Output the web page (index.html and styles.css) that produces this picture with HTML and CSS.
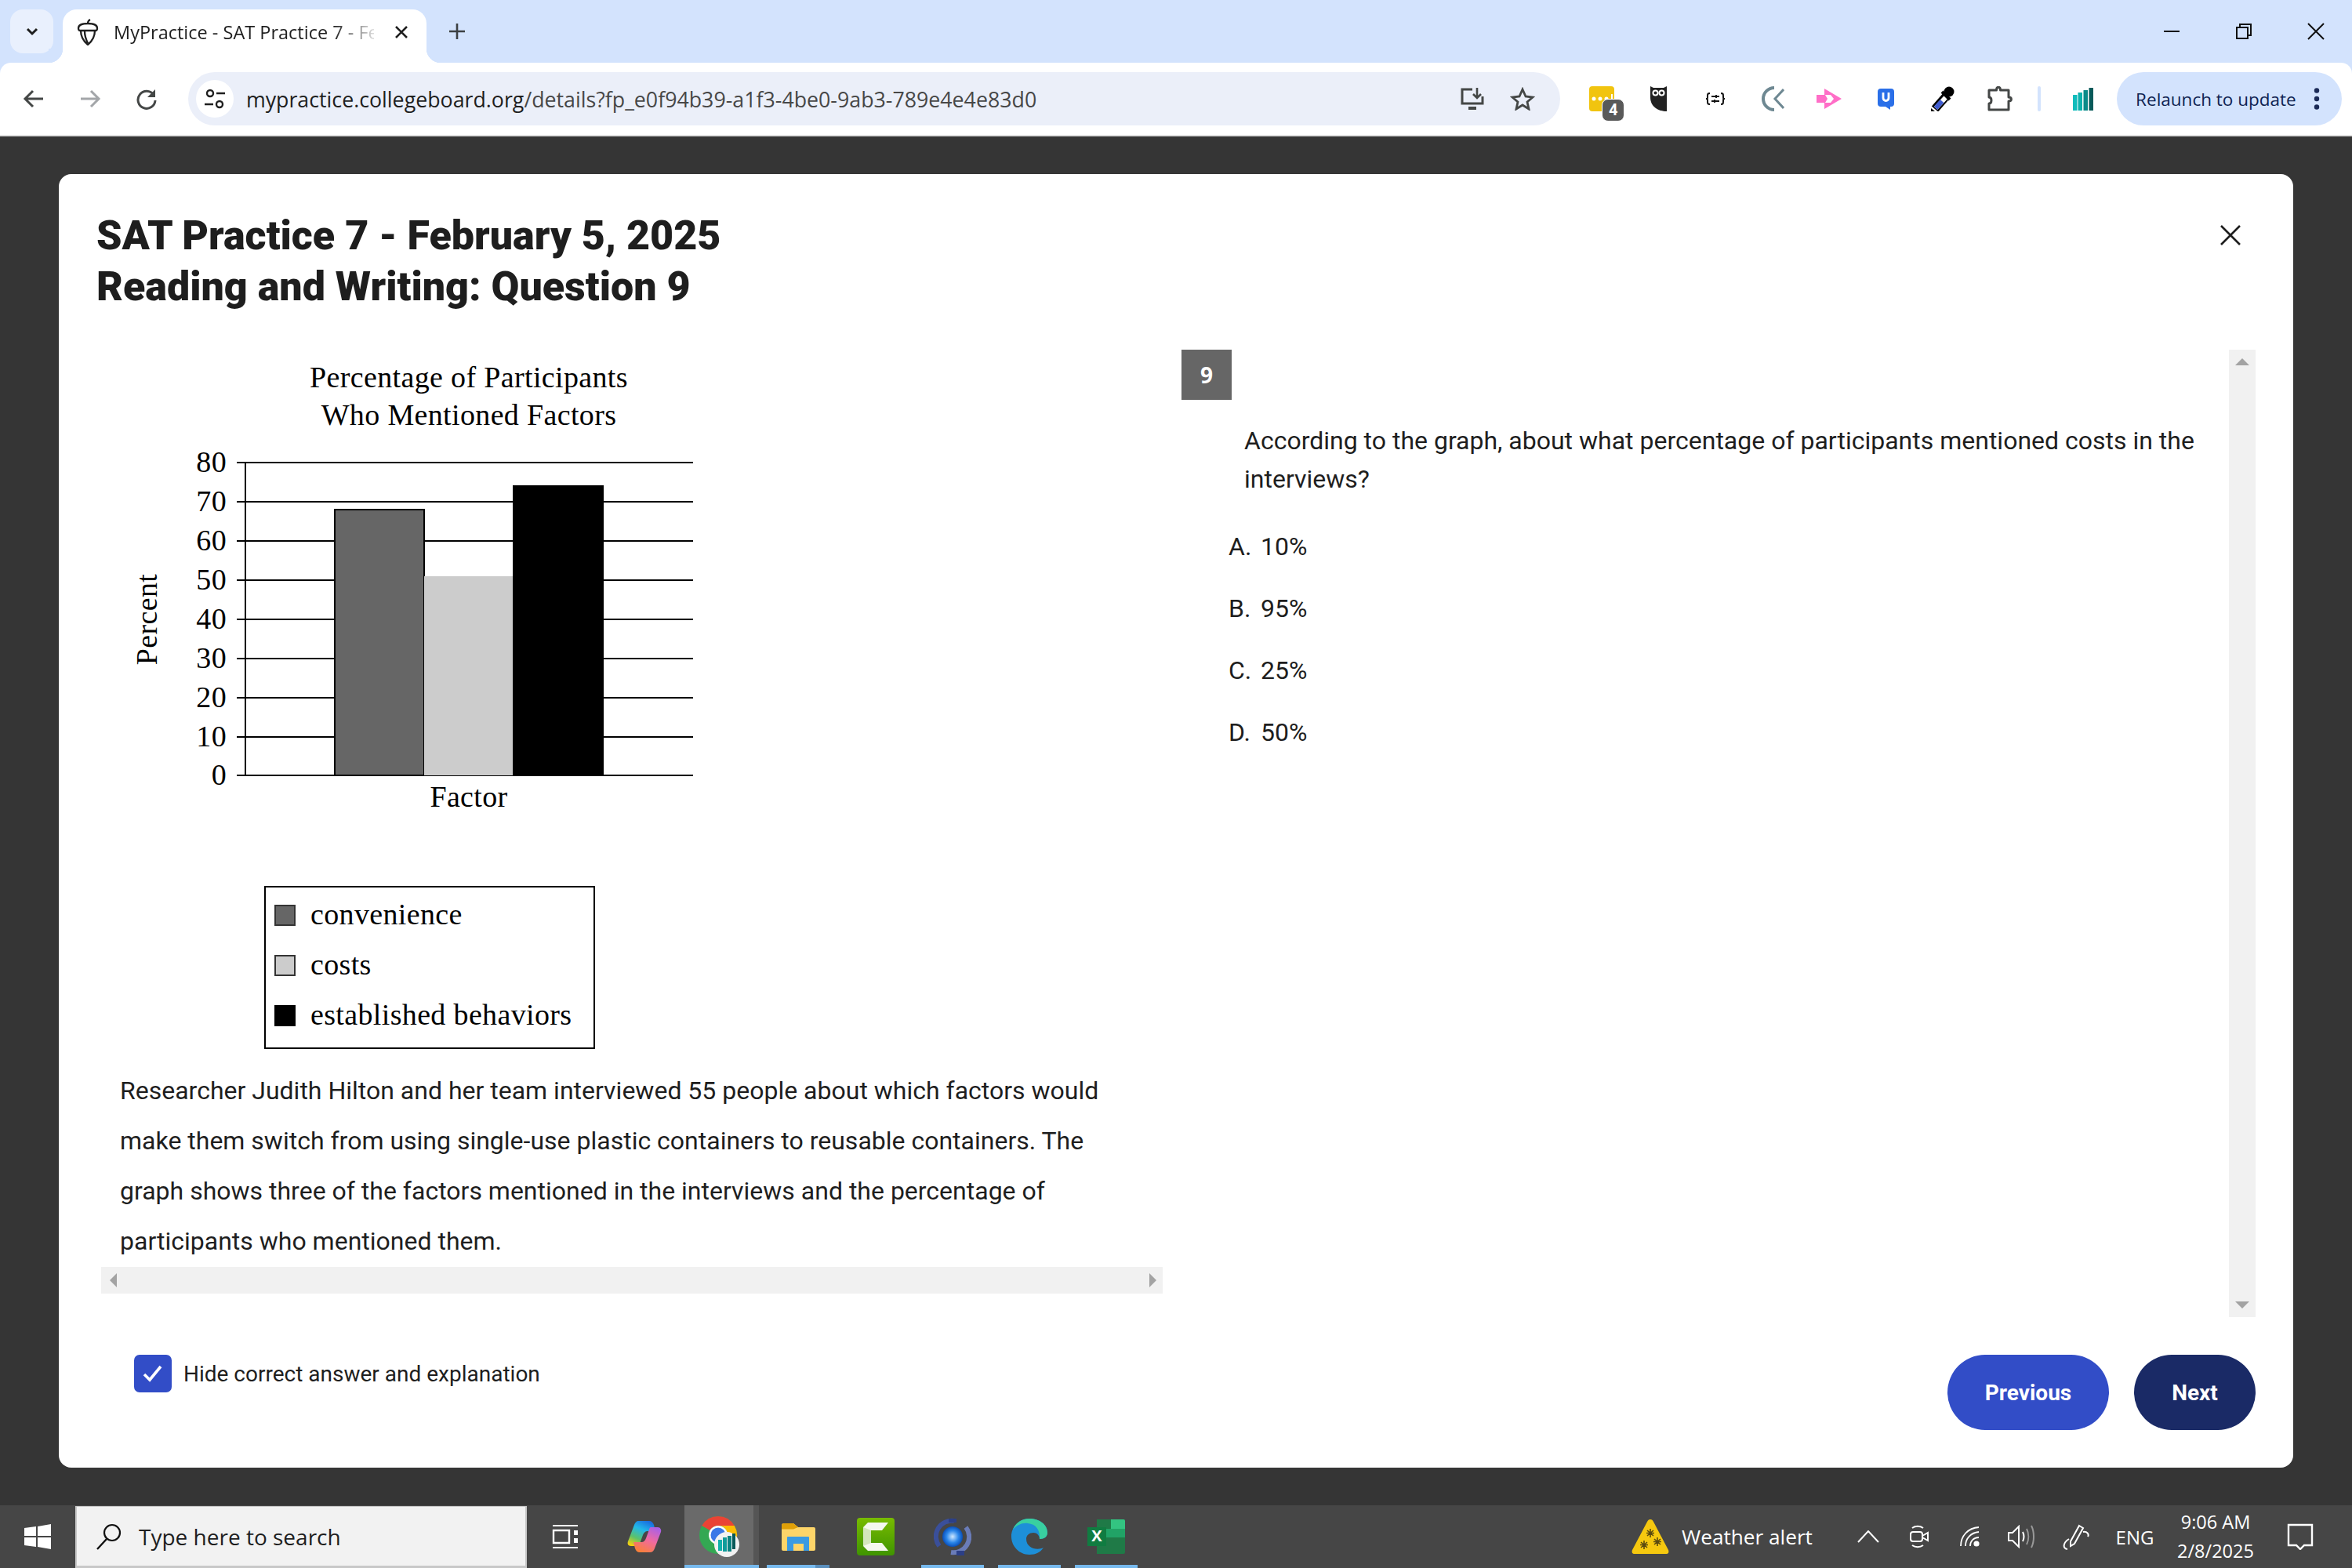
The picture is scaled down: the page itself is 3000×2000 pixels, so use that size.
FILE: index.html
```html
<!DOCTYPE html>
<html>
<head>
  <meta charset="UTF-8">
  <title>MyPractice - SAT Practice 7 - February 5, 2025</title>
  <link rel="stylesheet" href="styles.css">
</head>
<body>
  <div class="browser">
    <!-- Вкладки -->
    <div class="tabstrip">
      <div class="tab-menu">
        <svg width="20" height="20" viewBox="0 0 20 20"><path d="M4 7l6 6 6-6" fill="none" stroke="#1f1f1f" stroke-width="3"/></svg>
      </div>
      <div class="tab">
        <svg class="favicon" width="30" height="34" viewBox="0 0 30 34"><path d="M3 12c0-4 5-6 12-6s12 2 12 6c0 2-1 3-2 3H5c-1 0-2-1-2-3zM6 15c0 8 4 14 9 18 5-4 9-10 9-18M11 16c0 6 2 11 4 15M15 6c0-2 1-4 3-5" fill="none" stroke="#1f1f1f" stroke-width="2.300"/></svg>
        <span class="tab-title">MyPractice - SAT Practice 7 - Fe</span>
        <svg class="tab-close" width="20" height="20" viewBox="0 0 20 20"><path d="M3 3l14 14M17 3L3 17" stroke="#1f1f1f" stroke-width="2.6"/></svg>
      </div>
      <svg class="tab-new" width="24" height="24" viewBox="0 0 24 24"><path d="M12 2v20M2 12h20" stroke="#3c4043" stroke-width="2.6"/></svg>
      <div class="window-controls">
        <div class="win-btn"><svg width="22" height="22" viewBox="0 0 22 22"><path d="M1 11h20" stroke="#111" stroke-width="2"/></svg></div>
        <div class="win-btn"><svg width="22" height="22" viewBox="0 0 22 22"><path d="M2 6h14v14H2zM6 6V2h14v14h-4" fill="none" stroke="#111" stroke-width="2"/></svg></div>
        <div class="win-btn"><svg width="22" height="22" viewBox="0 0 22 22"><path d="M1 1l20 20M21 1L1 21" stroke="#111" stroke-width="2"/></svg></div>
      </div>
    </div>

    <!-- Адресная строка -->
    <div class="toolbar">
      <div class="nav-btn"><svg width="30" height="30" viewBox="0 0 30 30"><path d="M27 15H5M14 5L4 15l10 10" fill="none" stroke="#444746" stroke-width="3"/></svg></div>
      <div class="nav-btn"><svg width="30" height="30" viewBox="0 0 30 30"><path d="M3 15h22M16 5l10 10-10 10" fill="none" stroke="#a3a6a9" stroke-width="3"/></svg></div>
      <div class="nav-btn"><svg width="30" height="30" viewBox="0 0 30 30"><path d="M24 10a11 11 0 1 0 2 7" fill="none" stroke="#444746" stroke-width="3"/><path d="M26 3v10H16z" fill="#444746"/></svg></div>
      <div class="omnibox">
        <div class="site-info">
          <svg width="28" height="28" viewBox="0 0 28 28"><circle cx="8" cy="7" r="4" fill="none" stroke="#1f1f1f" stroke-width="2.4"/><path d="M16 7h11M1 21h11" stroke="#1f1f1f" stroke-width="2.6"/><circle cx="20" cy="21" r="4" fill="none" stroke="#1f1f1f" stroke-width="2.4"/></svg>
        </div>
        <div class="url"><span class="url-host">mypractice.collegeboard.org</span>/details?fp_e0f94b39-a1f3-4be0-9ab3-789e4e4e83d0</div>
        <svg class="omni-install" width="32" height="30" viewBox="0 0 32 30"><path d="M16 3H3v18h26V12" fill="none" stroke="#444746" stroke-width="3"/><path d="M11 27h10" stroke="#444746" stroke-width="4"/><path d="M22 1v11M17 9l5 5 5-5" fill="none" stroke="#444746" stroke-width="2.6"/></svg>
        <svg class="omni-star" width="32" height="30" viewBox="0 0 32 30"><path d="M16 3l4 9 9 1-7 6 2 9-8-5-8 5 2-9-7-6 9-1z" fill="none" stroke="#444746" stroke-width="2.8"/></svg>
      </div>
      <div class="extensions">
        <div class="ext">
          <svg width="32" height="32" viewBox="0 0 32 32"><rect width="32" height="32" rx="4" fill="#f1c40f"/><circle cx="6" cy="16" r="2.500" fill="#fff"/><circle cx="14" cy="16" r="2.500" fill="#fff"/><circle cx="22" cy="16" r="2.500" fill="#fff"/><path d="M29 10v8" stroke="#fff" stroke-width="2"/></svg>
          <span class="ext-badge">4</span>
        </div>
        <div class="ext">
          <svg width="21" height="32" viewBox="0 0 21 32"><path d="M0 0l4 2h13l4-2v32C10 32 0 26 0 14z" fill="#222"/><circle cx="6.500" cy="8.500" r="4" fill="#fff"/><circle cx="14.500" cy="8.500" r="4" fill="#fff"/><circle cx="6.500" cy="8.500" r="2" fill="#222"/><circle cx="14.500" cy="8.500" r="2" fill="#222"/></svg>
        </div>
        <div class="ext">
          <svg width="26" height="16" viewBox="0 0 26 16"><path d="M6 1C3 1 3 2 3 5s0 3-2 3c2 0 2 0 2 3s0 4 3 4M20 1c3 0 3 1 3 4s0 3 2 3c-2 0-2 0-2 3s0 4-3 4" fill="none" stroke="#111" stroke-width="2"/><path d="M8 5h10M8 11h10" stroke="#111" stroke-width="1.800"/><path d="M14 3v4M12 9v4" stroke="#111" stroke-width="1.800"/></svg>
        </div>
        <div class="ext">
          <svg width="30" height="32" viewBox="0 0 30 32"><path d="M17 2A14 14 0 1 0 17 30" fill="none" stroke="#6e8892" stroke-width="4"/><path d="M29 4L18 16l11 12" fill="none" stroke="#6e8892" stroke-width="3"/></svg>
        </div>
        <div class="ext">
          <svg width="32" height="26" viewBox="0 0 32 26"><path d="M0 8h10V0l22 13L10 26v-8H0z" fill="#ff6ec7"/><path d="M11 8h7l4 5-4 5h-7l3-5z" fill="#fff"/></svg>
        </div>
        <div class="ext">
          <svg width="21" height="27" viewBox="0 0 21 27"><path d="M4 0h13a4 4 0 0 1 4 4v15a4 4 0 0 1-4 4h-1l0 4-6-4H4a4 4 0 0 1-4-4V4a4 4 0 0 1 4-4z" fill="#2a6fe8"/><path d="M7 5v7a3.500 3.500 0 0 0 7 0V5" fill="none" stroke="#fff" stroke-width="2.800"/></svg>
        </div>
        <div class="ext">
          <svg width="30" height="32" viewBox="0 0 30 32"><path d="M5 29L19 13" stroke="#000" stroke-width="11"/><path d="M6 28L19 14" stroke="#fff" stroke-width="6"/><path d="M6 28l8-9" stroke="#3f5bd0" stroke-width="6"/><path d="M14 7l10 10" stroke="#000" stroke-width="4"/><circle cx="23" cy="7" r="6.500" fill="#000"/><path d="M0 28l5 4H0z" fill="#000"/></svg>
        </div>
        <div class="ext">
          <svg width="32" height="32" viewBox="0 0 32 32"><path d="M2 5h9.500c0-5 5-5 5 0H27v9c4.500 0 4.500 5 0 5v11H2v-8c4 0 4-8 0-8z" fill="none" stroke="#444746" stroke-width="3" stroke-linejoin="round"/></svg>
        </div>
      </div>
      <div class="toolbar-sep"></div>
      <div class="ext ext-last">
        <svg width="26" height="29" viewBox="0 0 26 29"><path d="M0 9h5.500v20H0z" fill="#10bcbc"/><path d="M6.500 6H12v23H6.500z" fill="#0cb0ac"/><path d="M13.500 3H19v26h-5.500z" fill="#0a8a88"/><path d="M20.500 0H26v29h-5.500z" fill="#075a5a"/></svg>
      </div>
      <div class="relaunch">
        <span>Relaunch to update</span>
        <svg width="8" height="28" viewBox="0 0 8 28"><circle cx="4" cy="3.500" r="3.200" fill="#1b2a57"/><circle cx="4" cy="14" r="3.200" fill="#1b2a57"/><circle cx="4" cy="24.500" r="3.200" fill="#1b2a57"/></svg>
      </div>
    </div>
    <div class="toolbar-line"></div>
  </div>

  <div class="page">
    <div class="modal">
      <div class="modal-head">
        <h1>SAT Practice 7 - February 5, 2025<br>Reading and Writing: Question 9</h1>
        <svg class="modal-close" width="28" height="28" viewBox="0 0 28 28"><path d="M2 2l24 24M26 2L2 26" stroke="#1e1e1e" stroke-width="2.6"/></svg>
      </div>

      <div class="modal-body">
        <div class="left-pane">
          <div class="stimulus">
            <svg class="chart" width="1354" height="913" viewBox="129 446 1354 913">
              <text class="chart-text" x="598" y="494" text-anchor="middle">Percentage of Participants</text>
              <text class="chart-text" x="598" y="542" text-anchor="middle">Who Mentioned Factors</text>

              <g stroke="#000" stroke-width="2">
                <path d="M302 590H884M302 640H884M302 690H884M302 740H884M302 790H884M302 840H884M302 890H884M302 940H884M302 989H884"/>
                <path d="M313 589V990"/>
                <rect x="427" y="650" width="114" height="339" fill="#666"/>
                <rect x="541" y="735" width="113" height="254" fill="#ccc" stroke="none"/>
                <rect x="655" y="620" width="114" height="369" fill="#000"/>
              </g>

              <g class="chart-text" text-anchor="end">
                <text x="289" y="602">80</text>
                <text x="289" y="652">70</text>
                <text x="289" y="702">60</text>
                <text x="289" y="752">50</text>
                <text x="289" y="802">40</text>
                <text x="289" y="852">30</text>
                <text x="289" y="902">20</text>
                <text x="289" y="952">10</text>
                <text x="289" y="1001">0</text>
              </g>

              <text class="chart-text" x="598" y="1029" text-anchor="middle">Factor</text>
              <text class="chart-text" transform="translate(200 790) rotate(-90)" text-anchor="middle">Percent</text>

              <rect x="338" y="1131" width="420" height="206" fill="#fff" stroke="#000" stroke-width="2"/>
              <rect x="351" y="1155" width="25" height="25" fill="#666" stroke="#333" stroke-width="2"/>
              <rect x="351" y="1219" width="25" height="25" fill="#ccc" stroke="#333" stroke-width="2"/>
              <rect x="351" y="1283" width="25" height="25" fill="#000" stroke="#000" stroke-width="2"/>
              <text class="chart-text" x="396" y="1179">convenience</text>
              <text class="chart-text" x="396" y="1243">costs</text>
              <text class="chart-text" x="396" y="1307">established behaviors</text>
            </svg>
            <p class="passage">Researcher Judith Hilton and her team interviewed 55 people about which factors would make them switch from using single-use plastic containers to reusable containers. The graph shows three of the factors mentioned in the interviews and the percentage of participants who mentioned them.</p>
          </div>
          <div class="hscroll">
            <span class="arrow arrow-left"></span>
            <span class="arrow arrow-right"></span>
          </div>
        </div>

        <div class="right-pane">
          <div class="question">
            <div class="q-number">9</div>
            <p class="q-text">According to the graph, about what percentage of participants mentioned costs in the interviews?</p>
            <ul class="options">
              <li><span class="opt-key">A.</span>10%</li>
              <li><span class="opt-key">B.</span>95%</li>
              <li><span class="opt-key">C.</span>25%</li>
              <li><span class="opt-key">D.</span>50%</li>
            </ul>
          </div>
          <div class="vscroll">
            <span class="arrow arrow-up"></span>
            <span class="arrow arrow-down"></span>
          </div>
        </div>
      </div>

      <div class="modal-foot">
        <label class="hide-answer">
          <span class="checkbox"><svg width="28" height="24" viewBox="0 0 28 24"><path d="M3 13l7 7L24 3" fill="none" stroke="#fff" stroke-width="3.6"/></svg></span>
          Hide correct answer and explanation
        </label>
        <div class="foot-buttons">
          <button class="btn btn-prev">Previous</button>
          <button class="btn btn-next">Next</button>
        </div>
      </div>
    </div>
  </div>

  <!-- Панель задач -->
  <div class="taskbar">
    <div class="start">
      <svg width="34" height="32" viewBox="0 0 34 32"><path d="M0 5l15-2v12H0zM17 3l17-3v15H17zM0 17h15v12L0 27zM17 17h17v15l-17-3z" fill="#fff"/></svg>
    </div>
    <div class="search">
      <svg width="34" height="34" viewBox="0 0 34 34"><circle cx="21" cy="12" r="10" fill="none" stroke="#111" stroke-width="2.2"/><path d="M14 20L2 33" stroke="#111" stroke-width="2.4"/></svg>
      <span>Type here to search</span>
    </div>
    <div class="task-icons">
      <div class="task-icon">
        <svg width="34" height="30" viewBox="0 0 34 30"><path d="M1 1h32M1 29h32" stroke="#fff" stroke-width="2"/><path d="M2 7h20v16H2z" fill="none" stroke="#fff" stroke-width="2.4"/><path d="M28 7h5v6h-5zM28 17h5v6h-5z" fill="#fff"/></svg>
      </div>
      <div class="task-icon">
        <svg width="44" height="40" viewBox="0 0 44 40">
          <defs>
            <linearGradient id="copilotA" x1="0.700" y1="0" x2="0.200" y2="1"><stop offset="0" stop-color="#1a6fe0"/><stop offset="0.350" stop-color="#22b8e8"/><stop offset="0.700" stop-color="#5cc26a"/><stop offset="1" stop-color="#f4d010"/></linearGradient>
            <linearGradient id="copilotB" x1="0.800" y1="0" x2="0.300" y2="1"><stop offset="0" stop-color="#a860e8"/><stop offset="0.500" stop-color="#f06aa0"/><stop offset="1" stop-color="#f9803a"/></linearGradient>
          </defs>
          <path d="M14 0h14c3 0 5 2 6 5l2 8H26c-3 0-5 2-6 5l-4 11c-1 2-2 3-5 3H5c-4 0-5-3-4-6l8-21C10 2 12 0 14 0z" fill="url(#copilotA)"/>
          <path d="M30 8h9c3 0 5 3 4 6l-8 21c-1 3-3 5-6 5H16c-3 0-5-2-6-5l-2-8h10c3 0 5-2 6-5l4-11c.5-2 1-3 2-3z" fill="url(#copilotB)"/>
        </svg>
      </div>
      <div class="task-icon task-active">
        <svg width="52" height="52" viewBox="0 0 52 52"><circle cx="24" cy="24" r="24" fill="#34a853"/><path d="M24 0A24 24 0 0 1 44.800 12H24A12 12 0 0 0 13.600 18L3.200 12A24 24 0 0 1 24 0z" fill="#ea4335"/><path d="M44.800 12A24 24 0 0 1 24 48L34.400 30A12 12 0 0 0 24 12z" fill="#fbbc04"/><circle cx="24" cy="24" r="12" fill="#fff"/><circle cx="24" cy="24" r="9.500" fill="#3b78e7"/><circle cx="35" cy="36" r="16" fill="#f2f2f2"/><path d="M24 30h5v14h-5z" fill="#12b0ac"/><path d="M30 27h5v18h-5z" fill="#0f9c9a"/><path d="M36 25h5v20h-5z" fill="#0c8482"/><path d="M42 22h4v20h-4z" fill="#075a5a"/></svg>
      </div>
      <div class="task-icon task-open task-stacked">
        <svg width="43" height="35" viewBox="0 0 43 35"><path d="M0 3a3 3 0 0 1 3-3h12l6 5h20a2 2 0 0 1 2 2v26a2 2 0 0 1-2 2H2a2 2 0 0 1-2-2z" fill="#fdd569"/><path d="M0 3a3 3 0 0 1 3-3h12l6 5-6 2.500H0z" fill="#e0a008"/><path d="M7 35V18a1 1 0 0 1 1-1h26a1 1 0 0 1 1 1v17h-7v-9H15v9z" fill="#3a9be2"/></svg>
      </div>
      <div class="task-icon">
        <svg width="48" height="48" viewBox="0 0 48 48">
          <defs><linearGradient id="camGreen" x1="0" y1="0" x2="0" y2="1"><stop offset="0" stop-color="#78bb00"/><stop offset="1" stop-color="#3f9400"/></linearGradient></defs>
          <rect width="48" height="48" rx="4" fill="url(#camGreen)"/>
          <path d="M14 6h26l-8 10H18v16h14l8 10H14l-6-6V12z" fill="#f5f8ee"/>
          <path d="M8 12l10 4v16l-10 4z" fill="#d4e6bc"/>
        </svg>
      </div>
      <div class="task-icon task-open">
        <svg width="48" height="48" viewBox="0 0 48 48">
          <defs><radialGradient id="globe"><stop offset="0" stop-color="#cfe8ff"/><stop offset="0.600" stop-color="#2a86ea"/><stop offset="1" stop-color="#0a4fb8"/></radialGradient></defs>
          <path d="M26 4A20 20 0 0 0 7 36" fill="none" stroke="#3a4f9a" stroke-width="6"/>
          <path d="M22 44A20 20 0 0 0 41 12" fill="none" stroke="#6a7cb8" stroke-width="6"/>
          <path d="M19 1h10v5H19zM29 42h10v6H29z" fill="#2c3f86"/>
          <circle cx="24" cy="24" r="13" fill="url(#globe)"/>
        </svg>
      </div>
      <div class="task-icon task-open">
        <svg width="48" height="48" viewBox="0 0 48 48"><path d="M24 1C11 1 1 11 1 24c0 12 10 23 23 23 8 0 14-3 18-9-8 4-22 1-22-11 0-5 4-8 9-8 6 0 8 5 8 8 6 0 10-3 10-8C47 8 36 1 24 1z" fill="#1d8fd8"/><path d="M47 19C47 8 36 1 24 1 14 1 6 7 3 15c5-6 12-9 19-8 10 1 16 8 15 20 6 0 10-3 10-8z" fill="#39cfa0"/></svg>
      </div>
      <div class="task-icon task-open">
        <svg width="48" height="44" viewBox="0 0 48 44"><path d="M12 0h34a2 2 0 0 1 2 2v40a2 2 0 0 1-2 2H12z" fill="#1f7a47"/><path d="M30 0h16a2 2 0 0 1 2 2v10H30z" fill="#33c481"/><path d="M12 12h36v11H12z" fill="#21a366"/><path d="M0 10h24v24H0z" fill="#107c41"/><text class="excel-x" x="12" y="28" text-anchor="middle">X</text></svg>
      </div>
    </div>
    <div class="tray">
      <div class="tray-weather">
        <svg width="48" height="46" viewBox="0 0 48 46"><path d="M24 1c2 0 3 1 4 3l19 36c1 3 0 5-3 5H4c-3 0-4-2-3-5L20 4c1-2 2-3 4-3z" fill="#f5c80f"/><g stroke="#5a4a10" stroke-width="1.6" fill="none"><path d="M24 13v11M19 18.500h10M20 15l8 7M28 15l-8 7M16 28v11M11 33.500h10M12 30l8 7M20 30l-8 7M33 24v11M28 29.500h10M29 26l8 7M37 26l-8 7"/></g></svg>
        <span>Weather alert</span>
      </div>
      <div class="tray-item">
        <svg width="28" height="16" viewBox="0 0 28 16"><path d="M1 15L14 1l13 14" fill="none" stroke="#fff" stroke-width="2"/></svg>
      </div>
      <div class="tray-item">
        <svg width="24" height="30" viewBox="0 0 24 30"><path d="M3 4c4-3 10-3 14 0M3 26c4 3 10 3 14 0" fill="none" stroke="#fff" stroke-width="2"/><rect x="1" y="9" width="15" height="12" rx="3" fill="none" stroke="#fff" stroke-width="2"/><path d="M16 14l7-4v10l-7-4" fill="none" stroke="#fff" stroke-width="2"/></svg>
      </div>
      <div class="tray-item">
        <svg width="26" height="26" viewBox="0 0 26 26"><path d="M1 25C1 12 10 2 24 1M7 25C7 15 14 8 24 7M13 25c0-6 4-11 11-11" fill="none" stroke="#fff" stroke-width="1.8"/><circle cx="21" cy="22" r="3.600" fill="#fff"/></svg>
      </div>
      <div class="tray-item">
        <svg width="34" height="30" viewBox="0 0 34 30"><path d="M1 10h5l8-8v26l-8-8H1z" fill="none" stroke="#fff" stroke-width="2"/><path d="M19 9c2 4 2 8 0 12" fill="none" stroke="#fff" stroke-width="2"/><path d="M24 5c3 6 3 14 0 20M30 1c4 8 4 20 0 28" fill="none" stroke="#999" stroke-width="2"/></svg>
      </div>
      <div class="tray-item">
        <svg width="34" height="34" viewBox="0 0 34 34"><path d="M21 3l5 3-11 20-5 3 0-6zM8 20c-7 4-9 12-2 13M26 11c5-1 8 3 6 6" fill="none" stroke="#fff" stroke-width="2"/></svg>
      </div>
      <div class="tray-item tray-lang">ENG</div>
      <div class="tray-item tray-clock"><span>9:06 AM</span><span>2/8/2025</span></div>
      <div class="tray-item">
        <svg width="34" height="34" viewBox="0 0 34 34"><path d="M2 2h30v26H22l-5 5-5-5H2z" fill="none" stroke="#fff" stroke-width="2.4"/></svg>
      </div>
    </div>
  </div>
</body>
</html>
```

FILE: styles.css
```css
* {
  box-sizing: border-box;
}

html, body {
  margin: 0;
  padding: 0;
}

body {
  width: 3000px;
  height: 2000px;
  display: flex;
  flex-direction: column;
  overflow: hidden;
  background-color: #353535;
  font-family: Roboto, sans-serif;
  color: #1e1e1e;
}

svg {
  display: block;
  flex-shrink: 0;
}

/* Browser */
.browser {
  background-color: #d3e3fd;
  font-family: "Open Sans", sans-serif;
}

.tabstrip {
  height: 80px;
  display: flex;
  padding-left: 13px;
  padding-top: 12px;
}

.tab-menu {
  width: 55px;
  height: 56px;
  background-color: #e9f0fd;
  border-radius: 16px;
  display: flex;
  align-items: center;
  justify-content: center;
}

.tab {
  position: relative;
  width: 464px;
  height: 68px;
  margin-left: 12px;
  padding: 0 22px 10px 17px;
  background-color: #fff;
  border-radius: 18px 18px 0 0;
  display: flex;
  align-items: center;
}

.tab::before,
.tab::after {
  content: "";
  position: absolute;
  bottom: 0;
  width: 18px;
  height: 18px;
}

.tab::before {
  left: -18px;
  background: radial-gradient(circle at 0 0, #d3e3fd 18px, #fff 18.5px);
}

.tab::after {
  right: -18px;
  background: radial-gradient(circle at 100% 0, #d3e3fd 18px, #fff 18.5px);
}

.tab-title {
  width: 332px;
  margin-left: 18px;
  font-size: 23.5px;
  white-space: nowrap;
  color: #1f1f1f;
  -webkit-mask-image: linear-gradient(to right, #000 280px, rgba(0, 0, 0, 0.15) 332px);
  mask-image: linear-gradient(to right, #000 280px, rgba(0, 0, 0, 0.15) 332px);
}

.tab-close {
  margin-left: auto;
}

.tab-new {
  margin: 16px 0 0 27px;
}

.window-controls {
  margin-left: auto;
  margin-top: -12px;
  display: flex;
}

.win-btn {
  width: 92px;
  height: 80px;
  display: flex;
  align-items: center;
  justify-content: center;
}

.toolbar {
  height: 92px;
  padding: 12px 13px 12px 7px;
  background-color: #fff;
  border-radius: 14px 14px 0 0;
  display: flex;
  align-items: center;
}

.toolbar-line {
  height: 2px;
  background-color: #e0e0e0;
}

.nav-btn {
  width: 72px;
  display: flex;
  justify-content: center;
}

.omnibox {
  width: 1751px;
  height: 68px;
  margin-left: 17px;
  padding: 0 32px 0 10px;
  background-color: #ebeff9;
  border-radius: 34px;
  display: flex;
  align-items: center;
}

.site-info {
  width: 48px;
  height: 48px;
  background-color: #fff;
  border-radius: 50%;
  display: flex;
  align-items: center;
  justify-content: center;
}

.url {
  margin-left: 16px;
  font-size: 26.75px;
  white-space: nowrap;
  color: #474747;
}

.url-host {
  color: #1f1f1f;
}

.omni-install {
  margin-left: auto;
}

.omni-star {
  margin-left: 32px;
}

.extensions {
  display: flex;
  margin-left: 17px;
}

.ext {
  position: relative;
  width: 72.5px;
  height: 50px;
  display: flex;
  align-items: center;
  justify-content: center;
}

.ext-last {
  width: 72px;
  margin-left: 18px;
}

.ext-badge {
  position: absolute;
  left: 36px;
  top: 25px;
  width: 29px;
  height: 29px;
  background-color: #595959;
  border: 1px solid #fff;
  border-radius: 8px;
  font: bold 20px/27px Roboto, sans-serif;
  color: #fff;
  text-align: center;
}

.toolbar-sep {
  width: 4px;
  height: 32px;
  margin-left: 12px;
  background-color: #d3e3fd;
  border-radius: 2px;
}

.relaunch {
  width: 287px;
  height: 68px;
  margin-left: 7px;
  padding: 0 28px 0 24px;
  background-color: #d3e3fd;
  border-radius: 34px;
  display: flex;
  align-items: center;
  justify-content: space-between;
  font-size: 22.5px;
  color: #0f2352;
  white-space: nowrap;
}

/* Page */
.page {
  flex: 1;
  min-height: 0;
  padding: 48px 75px;
}

.modal {
  width: 2850px;
  height: 1650px;
  background-color: #fff;
  border-radius: 16px;
  padding: 46px 48px 48px;
  display: flex;
  flex-direction: column;
}

.modal-head {
  display: flex;
  justify-content: space-between;
  align-items: flex-start;
  height: 130px;
}

.modal-head h1 {
  margin: 0;
  font-size: 52px;
  line-height: 65px;
  font-weight: 900;
}

.modal-close {
  margin: 18px 18px 0 0;
}

.modal-body {
  height: 1234px;
  margin-top: 48px;
  display: flex;
  gap: 24px;
}

.left-pane {
  width: 1354px;
  height: 1204px;
  margin-left: 6px;
  display: flex;
  flex-direction: column;
}

.stimulus {
  height: 1170px;
}

.passage {
  margin: 0;
  padding: 0 24px;
  font-size: 32px;
  line-height: 64px;
}

.hscroll {
  height: 34px;
  padding: 0 8px 0 11px;
  background-color: #f1f1f1;
  display: flex;
  align-items: center;
  justify-content: space-between;
}

.arrow {
  display: block;
  width: 0;
  height: 0;
  border-style: solid;
  border-color: transparent;
}

.arrow-left {
  border-width: 9px 9px 9px 0;
  border-right-color: #a3a3a3;
}

.arrow-right {
  border-width: 9px 0 9px 9px;
  border-left-color: #a3a3a3;
}

.arrow-up {
  border-width: 0 9px 9px;
  border-bottom-color: #a3a3a3;
}

.arrow-down {
  border-width: 9px 9px 0;
  border-top-color: #a3a3a3;
}

.right-pane {
  width: 1370px;
  display: flex;
}

.question {
  flex: 1;
}

.q-number {
  width: 64px;
  height: 64px;
  background-color: #666;
  color: #fff;
  font: bold 28px/64px "Open Sans", sans-serif;
  text-align: center;
}

.q-text {
  margin: 28px 0 0;
  padding-left: 80px;
  padding-right: 40px;
  font-size: 32px;
  line-height: 49px;
}

.options {
  list-style: none;
  margin: 22px 0 0;
  padding: 0 0 0 60px;
  font-size: 32px;
  line-height: 79px;
}

.opt-key {
  display: inline-block;
  width: 41px;
}

.vscroll {
  width: 34px;
  padding: 11px 0;
  background-color: #f1f1f1;
  display: flex;
  flex-direction: column;
  align-items: center;
  justify-content: space-between;
}

.modal-foot {
  margin-top: 48px;
  height: 96px;
  padding-left: 48px;
  display: flex;
  justify-content: space-between;
  align-items: flex-start;
}

.hide-answer {
  display: flex;
  align-items: center;
  gap: 15px;
  font-size: 28px;
}

.checkbox {
  width: 48px;
  height: 48px;
  background-color: #324dc7;
  border-radius: 7px;
  display: flex;
  align-items: center;
  justify-content: center;
}

.foot-buttons {
  display: flex;
  gap: 32px;
}

.btn {
  height: 96px;
  border: none;
  border-radius: 48px;
  color: #fff;
  font: bold 28px Roboto, sans-serif;
}

.btn-prev {
  width: 206px;
  background-color: #324dc7;
}

.btn-next {
  width: 155px;
  background-color: #1a2a66;
}

/* Chart */
.chart-text {
  font-family: "Liberation Serif", serif;
  font-size: 38px;
  letter-spacing: 0.35px;
  fill: #000;
}

/* Taskbar */
.taskbar {
  height: 80px;
  flex-shrink: 0;
  background-color: #464646;
  display: flex;
  font-family: "Open Sans", sans-serif;
  color: #fff;
}

.start {
  width: 96px;
  display: flex;
  align-items: center;
  justify-content: center;
}

.search {
  width: 576px;
  margin-top: 1px;
  padding-left: 24px;
  background-color: #f2f2f2;
  border: 2px solid #c8c8c8;
  border-top-width: 1px;
  border-bottom-width: 3px;
  display: flex;
  align-items: center;
  gap: 21px;
  font-size: 28px;
  color: #1e1e1e;
}

.task-icons {
  display: grid;
  grid-template-columns: 98px 103px 95px 100px 98px 98px 98px 98px;
}

.task-icon {
  position: relative;
  display: flex;
  align-items: center;
  justify-content: center;
}

.task-active {
  background: linear-gradient(to right, #6a6a6a 88px, #555 88px, #555 95px);
  padding-right: 6px;
}

.task-active::after,
.task-open::after {
  content: "";
  position: absolute;
  left: 9px;
  right: 9px;
  bottom: 0;
  height: 4px;
  background-color: #76b9ed;
}

.task-active::after {
  left: 0;
  right: 0;
}

.task-stacked::after {
  left: 10px;
  right: 28px;
  box-shadow: 18px 0 0 -0px #5a8fbd;
  width: 62px;
}

.excel-x {
  font: bold 20px "Open Sans", sans-serif;
  fill: #fff;
}

.tray {
  margin-left: auto;
  padding-right: 23px;
  display: grid;
  grid-template-columns: 275px 66px 64px 65px 65px 75px 76px 130px 86px;
}

.tray-weather {
  display: flex;
  align-items: center;
  padding-left: 6px;
  gap: 16px;
  font-size: 26.2px;
  white-space: nowrap;
}

.tray-item {
  display: flex;
  align-items: center;
  justify-content: center;
}

.tray-lang {
  font-size: 24px;
}

.tray-clock {
  flex-direction: column;
  gap: 8px;
  font-size: 23.5px;
  line-height: 29px;
  white-space: nowrap;
}
```
